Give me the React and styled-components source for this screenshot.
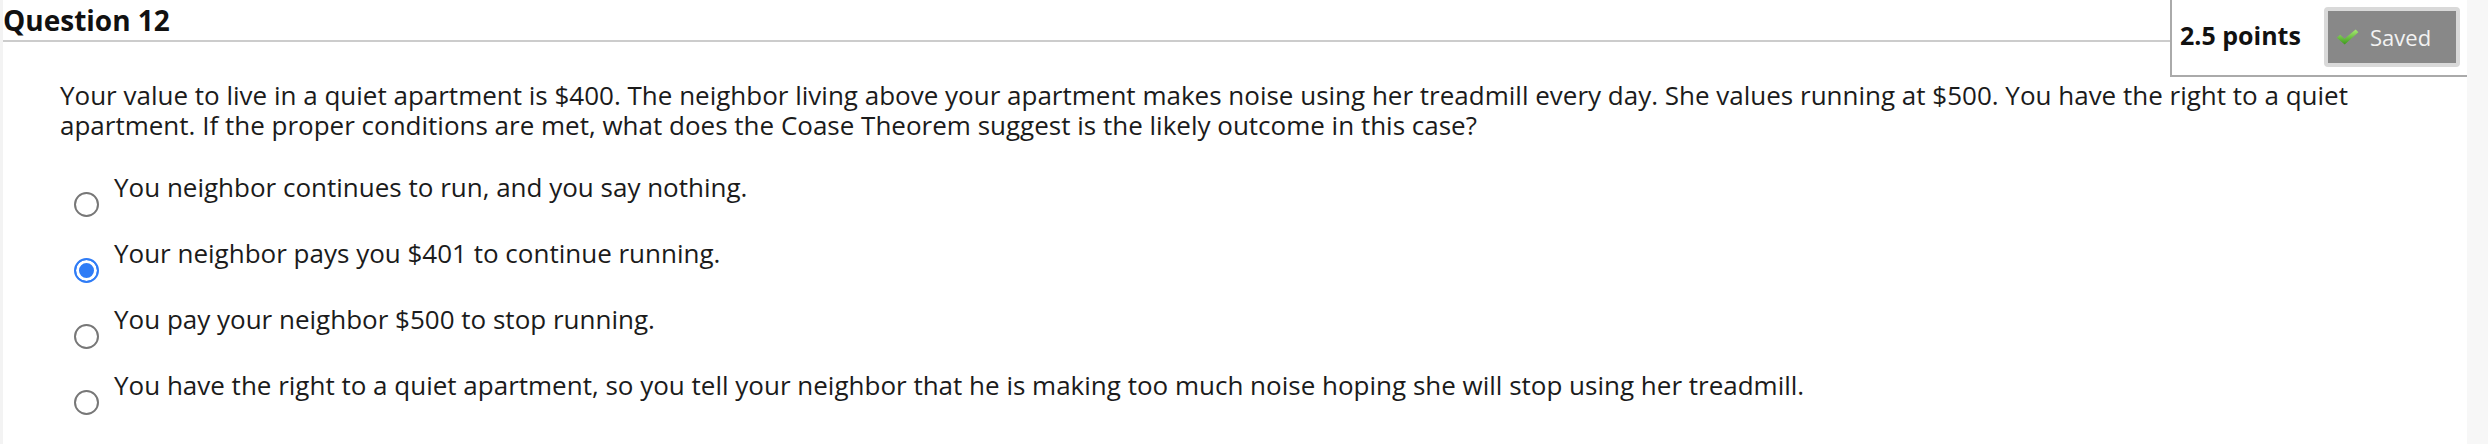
import React from "react";
import styled, { createGlobalStyle } from "styled-components";

const GlobalStyle = createGlobalStyle`
  html, body {
    margin: 0;
    padding: 0;
    background: #f7f7f7;
  }
  body {
    font-family: "Open Sans", "Liberation Sans", sans-serif;
    color: #1b1b1b;
  }
`;

const Page = styled.div`
  display: flex;
  width: 2488px;
  height: 444px;
  overflow: hidden;
`;

const Panel = styled.div`
  width: 2467px;
  flex: none;
  background: #fff;
  border-left: 3px solid #f3f3f3;
  box-sizing: border-box;
  display: flex;
  flex-direction: column;
`;

const Header = styled.div`
  display: flex;
  align-items: flex-start;
`;

const TitleBar = styled.div`
  flex: 1;
  height: 40px;
  border-bottom: 2px solid #cccccc;
  display: flex;
  align-items: flex-end;
`;

const Title = styled.h2`
  margin: 0;
  font-size: 28px;
  font-weight: 700;
  line-height: 40px;
  color: #111;
`;

const PointsBox = styled.div`
  display: flex;
  align-items: center;
  justify-content: space-between;
  width: 297px;
  height: 77px;
  box-sizing: border-box;
  border: 2px solid #aaaaaa;
  border-top: none;
  border-right: none;
  padding: 8px 7px 9px 8px;
`;

const Points = styled.span`
  font-size: 25px;
  font-weight: 700;
  color: #111;
  margin-top: -4px;
`;

const SavedButton = styled.div`
  display: flex;
  align-items: center;
  gap: 11px;
  width: 136px;
  height: 60px;
  box-sizing: border-box;
  border: 4px solid #d9d9d9;
  border-radius: 4px;
  background: #888888;
  padding-left: 8px;
  color: #f2f2f2;
  font-size: 22px;
`;

const Body = styled.div`
  padding: 3px 80px 0 57px;
`;

const QuestionText = styled.p`
  margin: 0 0 32px 0;
  font-size: 26px;
  line-height: 30px;
`;

const Options = styled.div`
  display: flex;
  flex-direction: column;
  gap: 21px;
`;

const Option = styled.label`
  display: flex;
  align-items: flex-start;
  gap: 15px;
  font-size: 26px;
  line-height: 30px;
`;

const Radio = styled.span`
  flex: none;
  width: 25px;
  height: 25px;
  margin-top: 20px;
  margin-left: 14px;
  box-sizing: border-box;
  border-radius: 50%;
  border: 2px solid ${(p) => (p.$checked ? "#2f7cf6" : "#777777")};
  background: ${(p) => (p.$checked ? "#2f7cf6" : "#fff")};
  box-shadow: ${(p) => (p.$checked ? "inset 0 0 0 3px #fff" : "none")};
`;

const CheckIcon = () => (
  <svg width="23" height="16" viewBox="0 0 22 15">
    <defs>
      <linearGradient id="chk" x1="0" y1="0" x2="0" y2="1">
        <stop offset="0" stopColor="#a6ea72" />
        <stop offset="1" stopColor="#3d9a1c" />
      </linearGradient>
    </defs>
    <path
      d="M0.8 8.2 L4 5.4 L8.2 9.2 L18.8 0.4 L21.4 3 L8.3 14.6 Z"
      fill="url(#chk)"
    />
  </svg>
);

const options = [
  "You neighbor continues to run, and you say nothing.",
  "Your neighbor pays you $401 to continue running.",
  "You pay your neighbor $500 to stop running.",
  "You have the right to a quiet apartment, so you tell your neighbor that he is making too much noise hoping she will stop using her treadmill.",
];

const App = () => {
  const selected = 1;
  return (
    <>
      <GlobalStyle />
      <Page>
        <Panel>
          <Header>
            <TitleBar>
              <Title>Question 12</Title>
            </TitleBar>
            <PointsBox>
              <Points>2.5 points</Points>
              <SavedButton>
                <CheckIcon />
                <span>Saved</span>
              </SavedButton>
            </PointsBox>
          </Header>
          <Body>
            <QuestionText>
              Your value to live in a quiet apartment is $400. The neighbor
              living above your apartment makes noise using her treadmill every
              day. She values running at $500. You have the right to a quiet
              apartment. If the proper conditions are met, what does the Coase
              Theorem suggest is the likely outcome in this case?
            </QuestionText>
            <Options>
              {options.map((text, index) => (
                <Option key={index}>
                  <Radio $checked={index === selected} />
                  <span>{text}</span>
                </Option>
              ))}
            </Options>
          </Body>
        </Panel>
      </Page>
    </>
  );
};

export default App;
